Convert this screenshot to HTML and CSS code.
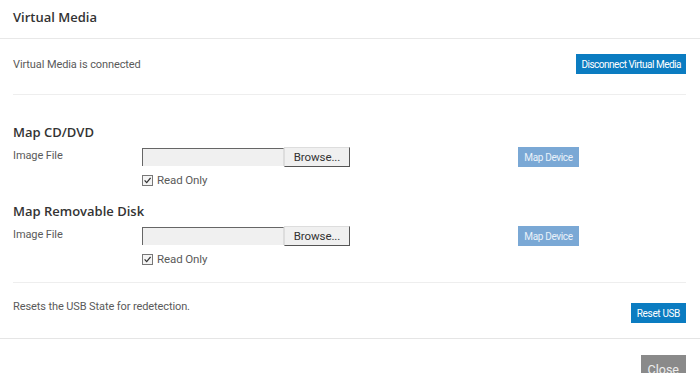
FILE: index.html
```html
<!DOCTYPE html>
<html lang="en">
<head>
    <meta charset="UTF-8">
    <title>Virtual Media</title>
    <link rel="stylesheet" href="styles.css">
</head>
<body>
    <div class="modal">
        <div class="modal-header">
            <h1>Virtual Media</h1>
        </div>

        <div class="modal-body">
            <!-- connection status -->
            <div class="row status-row">
                <span class="text">Virtual Media is connected</span>
                <button class="btn btn-primary btn-wide">Disconnect Virtual Media</button>
            </div>

            <!-- CD/DVD -->
            <div class="map-section first">
                <h2>Map CD/DVD</h2>
                <div class="map-grid">
                    <span class="label">Image File</span>
                    <div class="file-input">
                        <span class="file-name"></span>
                        <span class="browse">Browse...</span>
                    </div>
                    <button class="btn btn-disabled">Map Device</button>
                </div>
                <label class="check">
                    <span class="box">
                        <svg width="9" height="9" viewBox="0 0 9 9"><path d="M1.6 4.4 L3.7 6.6 L7.6 1.8" fill="none" stroke="#333" stroke-width="1.3"/></svg>
                    </span>
                    Read Only
                </label>
            </div>

            <!-- Removable disk -->
            <div class="map-section last">
                <h2>Map Removable Disk</h2>
                <div class="map-grid">
                    <span class="label">Image File</span>
                    <div class="file-input">
                        <span class="file-name"></span>
                        <span class="browse">Browse...</span>
                    </div>
                    <button class="btn btn-disabled">Map Device</button>
                </div>
                <label class="check">
                    <span class="box">
                        <svg width="9" height="9" viewBox="0 0 9 9"><path d="M1.6 4.4 L3.7 6.6 L7.6 1.8" fill="none" stroke="#333" stroke-width="1.3"/></svg>
                    </span>
                    Read Only
                </label>
            </div>

            <!-- USB reset -->
            <div class="row reset-row">
                <span class="text">Resets the USB State for redetection.</span>
                <button class="btn btn-primary">Reset USB</button>
            </div>
        </div>

        <div class="modal-footer">
            <button class="btn btn-close">Close</button>
        </div>
    </div>
</body>
</html>
```

FILE: styles.css
```css
body {
    margin: 0;
    background: #fff;
    font-family: Roboto, "Liberation Sans", sans-serif;
    font-size: 11px;
    letter-spacing: -0.1px;
    color: #5a5a5a;
}

.modal {
    width: 700px;
    height: 373px;
    overflow: hidden;
}

.modal-header {
    height: 38px;
    padding: 0 13px;
    display: flex;
    align-items: center;
    border-bottom: 1px solid #e8e8e8;
}

.modal-header h1 {
    margin: 0 0 4px;
    font-family: "Open Sans", sans-serif;
    font-size: 13px;
    font-weight: 600;
    letter-spacing: 0;
    color: #333;
}

.modal-body {
    padding: 0 14px 0 13px;
}

.row {
    display: flex;
    justify-content: space-between;
    align-items: center;
}

.status-row {
    padding: 15px 0 20px;
    border-bottom: 1px solid #eee;
}

.status-row .text {
    line-height: 18px;
    margin-top: 2px;
}

.reset-row {
    padding: 20px 0 15px;
}

.reset-row .text {
    align-self: flex-start;
    line-height: 14px;
    margin-top: -3px;
}

.text {
    line-height: 20px;
}

.btn {
    border: none;
    height: 20px;
    padding: 0 6px;
    font-family: Roboto, sans-serif;
    font-size: 10px;
    letter-spacing: -0.35px;
    color: #fff;
    cursor: pointer;
}

.btn-wide {
    padding: 0 5px;
    letter-spacing: -0.5px;
}

.btn-primary {
    background: #0b7cc1;
}

.btn-disabled {
    background: #7aa8d5;
    color: #eaf2fa;
    width: 61px;
    padding: 0;
}

.map-section {
    padding-top: 12px;
}

.map-section.first {
    padding-top: 27px;
}

.map-section.last {
    padding-bottom: 14px;
    border-bottom: 1px solid #eee;
}

.map-section h2 {
    margin: 0;
    font-family: "Open Sans", sans-serif;
    font-size: 13px;
    font-weight: 600;
    line-height: 20px;
    letter-spacing: 0;
    color: #333;
}

.map-grid {
    display: grid;
    grid-template-columns: 129px 376px auto;
    align-items: start;
    margin-top: 5px;
    height: 20px;
}

.label {
    line-height: 16px;
    padding-top: 1px;
}

.file-input {
    display: flex;
    width: 209px;
    height: 20px;
}

.file-name {
    width: 140px;
    height: 17px;
    margin-top: 1px;
    background: #f0f0f0;
    border-top: 1px solid #666;
    border-left: 1px solid #666;
    border-right: 1px solid #ddd;
}

.browse {
    width: 64px;
    height: 18px;
    line-height: 18px;
    background: #f0f0f0;
    border: 1px solid #ddd;
    border-right-color: #555;
    border-bottom-color: #555;
    text-align: center;
    font-size: 11.5px;
    color: #333;
}

.check {
    display: flex;
    align-items: center;
    gap: 4px;
    margin: 4px 0 0 129px;
    line-height: 18px;
    font-size: 11.5px;
}

.box {
    width: 9px;
    height: 9px;
    border: 1px solid #777;
    background: #f4f4f4;
    display: flex;
}

.modal-footer {
    border-top: 1px solid #e5e5e5;
    padding: 16px 14px 0 0;
    display: flex;
    justify-content: flex-end;
}

.btn-close {
    background: #8a8a8a;
    height: 28px;
    padding: 0 7px;
    font-size: 12.5px;
    letter-spacing: 0;
    color: #eee;
}
```
